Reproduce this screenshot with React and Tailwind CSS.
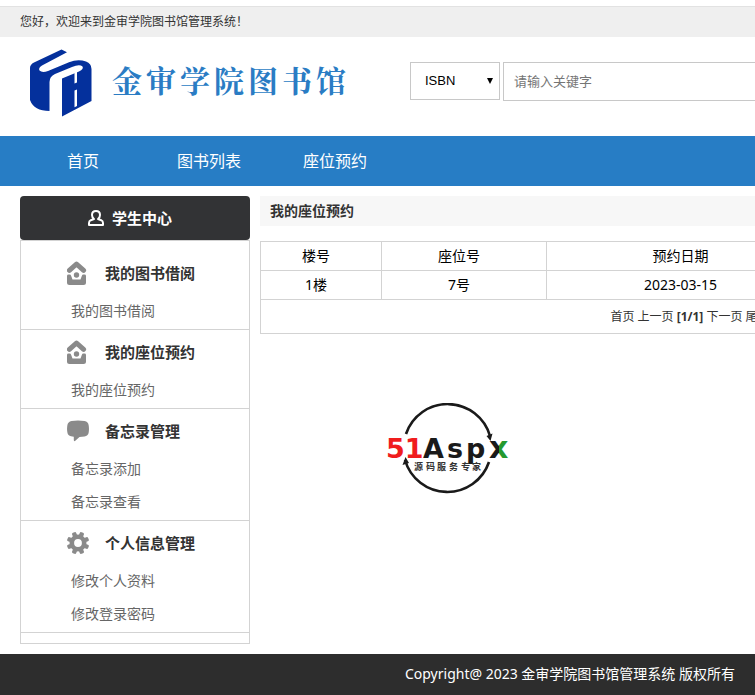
import React from 'react';

const navLinks = ['首页', '图书列表', '座位预约'];

const menuGroups = [
  { title: '我的图书借阅', icon: HomeIcon, items: ['我的图书借阅'] },
  { title: '我的座位预约', icon: HomeIcon, items: ['我的座位预约'] },
  { title: '备忘录管理', icon: ChatIcon, items: ['备忘录添加', '备忘录查看'] },
  { title: '个人信息管理', icon: GearIcon, items: ['修改个人资料', '修改登录密码'] },
];

const reservations = [{ floor: '1楼', seat: '7号', date: '2023-03-15' }];

function HomeIcon() {
  return (
    <svg width="22" height="24" viewBox="0 0 22 24" className="text-[#8a8a8a]" aria-hidden="true">
      <path d="M2.4 9.4 L9.5 3 L16.6 9.4" fill="none" stroke="currentColor" strokeWidth="5" strokeLinecap="round" strokeLinejoin="round" />
      <circle cx="9.5" cy="14" r="2.7" fill="currentColor" />
      <path d="M0 15 Q0 13.6 1.5 13.6 H2.6 Q3.8 13.6 4.2 15 L5.5 18.6 H13.5 L14.8 15 Q15.2 13.6 16.4 13.6 H17.5 Q19 13.6 19 15 V21.5 Q19 24 16.5 24 H2.5 Q0 24 0 21.5 Z" fill="currentColor" />
    </svg>
  );
}

function ChatIcon() {
  return (
    <svg width="22" height="24" viewBox="0 0 22 24" fill="#8a8a8a" aria-hidden="true">
      <path d="M4.5 2 Q11 0.8 17.5 2 Q21.3 2.8 21.7 6.5 Q22.3 10.5 21.6 14 Q21 17 17.5 17.4 L12.5 17.9 L8 22 Q6.8 22.5 6.8 21 V17.8 L4 17.3 Q0.9 16.6 0.4 13.5 Q-0.3 10 0.4 6 Q1 2.8 4.5 2 Z" />
    </svg>
  );
}

function GearIcon() {
  return (
    <svg width="22" height="22" viewBox="-11 -11 22 22" aria-hidden="true">
      <circle r="6.2" fill="none" stroke="#8a8a8a" strokeWidth="4.6" />
      {[22.5, 67.5, 112.5, 157.5, 202.5, 247.5, 292.5, 337.5].map((angle) => (
        <rect key={angle} x="-2.2" y="-11.3" width="4.4" height="5" rx="1.4" fill="#8a8a8a" transform={`rotate(${angle})`} />
      ))}
    </svg>
  );
}

function UserIcon() {
  return (
    <svg width="16" height="16" viewBox="0 0 16 16" fill="none" stroke="#fff" strokeWidth="2" strokeLinejoin="round" aria-hidden="true">
      <path d="M6 9 Q4 7.5 4 5 Q4 1 8 1 Q12 1 12 5 Q12 7.5 10 9 L13.2 10.2 Q15 11 15 13 V15 H1 V13 Q1 11 2.8 10.2 Z" />
    </svg>
  );
}

function SchoolLogo() {
  return (
    <svg width="64" height="68" viewBox="0 0 64 68" fill="#04309c" aria-hidden="true">
      <path d="M33.5 0.5 L39 3.2 L14 16.5 Q10 19 11.5 21.5 Q14 24 20 22 L41 13.2 Q50 9.5 58 12.5 Q63.5 14.5 63.5 20 V52 L34 67.5 V29.5 L51 22.5 Q56 20 54.5 17.5 Q51.5 15 44 18 L27 25 Q21.5 27.5 21.5 33 V62 Q6 62 2 51 V19 Q2 15.5 6 13.5 Z" />
      <path d="M46.5 23.5 L49 22.4 V33.5 L46.5 34.6 Z M46.5 41.5 L49 40.4 V57 L46.5 58.2 Z" fill="#fff" />
    </svg>
  );
}

function AspxLogo() {
  return (
    <svg width="126" height="92" viewBox="0 0 126 92" aria-label="51Aspx">
      <defs>
        <linearGradient id="xFill">
          <stop offset="0.5" stopColor="#1a1a1a" />
          <stop offset="0.5" stopColor="#25992f" />
        </linearGradient>
      </defs>
      <g fill="none" stroke="#1a1a1a" strokeWidth="2.6">
        <path d="M19 31 A44 44 0 0 1 103 33" />
        <path d="M102 59 A44 44 0 0 1 18 57" />
      </g>
      <path d="M99.5 33 L105.5 30.5 L103.5 38 Z M15.5 62 L18.5 54 L22 60 Z" fill="#1a1a1a" />
      <g fontFamily="'DejaVu Sans'" fontWeight="bold" fontSize="27">
        <text x="-1" y="55" fill="#f01d1d">51</text>
        <g fill="#1a1a1a">
          <text x="36" y="55">A</text>
          <text x="60" y="55">s</text>
          <text x="79" y="55">p</text>
          <text x="102" y="55" fontSize="30" fill="url(#xFill)">x</text>
        </g>
      </g>
      <text x="27 39 50 62 74 85" y="67" fontFamily="'Noto Sans CJK SC'" fontSize="9" fontWeight="bold" fill="#333">
        源码服务专家
      </text>
    </svg>
  );
}

function Header() {
  return (
    <header>
      <div className="mt-1.5 border-t border-[#e2e2e2] bg-[#efefef]">
        <p className="mx-auto w-[1100px] text-xs leading-[30px] text-[#333]">
          您好，欢迎来到金审学院图书馆管理系统！
        </p>
      </div>
      <div className="mx-auto flex h-[99px] w-[1100px] items-start">
        <a href="#" className="flex w-[390px] pt-3 pl-2">
          <SchoolLogo />
          <span className="ml-5 flex gap-1 pt-2 font-['Noto_Serif_CJK_SC','Noto_Sans_CJK_SC',serif] text-3xl leading-[44px] font-bold text-[#2a7cc4]">
            {'金审学院图书馆'.split('').map((char) => (
              <span key={char}>{char}</span>
            ))}
          </span>
        </a>
        <form className="flex items-start gap-[3px] pt-[25px]">
          <div className="relative">
            <select
              aria-label="检索字段"
              className="h-[38px] w-[90px] appearance-none border border-[#c8c8c8] bg-white pl-3.5 font-['Liberation_Sans',sans-serif] text-[13px] text-black"
            >
              <option>ISBN</option>
            </select>
            <svg width="6" height="6" viewBox="0 0 6 6" className="pointer-events-none absolute top-4 right-[7px]" aria-hidden="true">
              <path d="M0 0 H6 L3 6 Z" />
            </svg>
          </div>
          <input
            type="text"
            aria-label="关键字"
            placeholder="请输入关键字"
            className="h-[39px] w-[400px] border border-[#c8c8c8] px-2.5 pb-0.5 text-[13px] placeholder:text-[#757575]"
          />
        </form>
      </div>
      <nav className="bg-[#277dc5]">
        <ul className="mx-auto flex w-[1100px]">
          {navLinks.map((label) => (
            <li key={label} className="w-[126px] text-center">
              <a href="#" className="text-base leading-[50px] text-white">{label}</a>
            </li>
          ))}
        </ul>
      </nav>
    </header>
  );
}

function Sidebar() {
  return (
    <aside className="w-[230px] shrink-0">
      <h2 className="flex h-11 items-center justify-center gap-2 rounded bg-[#323335] pr-2.5 text-[15px] font-bold text-white">
        <UserIcon />
        学生中心
      </h2>
      <div className="border border-[#d3d3d3] py-2.5">
        {menuGroups.map(({ title, icon: Icon, items }) => (
          <section key={title} className="border-b border-[#d3d3d3] pb-px">
            <h3 className="flex h-11 items-center gap-4 pl-[46px] text-[15px] font-bold text-[#333]">
              <Icon />
              {title}
            </h3>
            <ul className="pl-[50px]">
              {items.map((item) => (
                <li key={item} className="h-[33px] text-sm leading-[31px]">
                  <a href="#" className="text-[#666]">{item}</a>
                </li>
              ))}
            </ul>
          </section>
        ))}
      </div>
    </aside>
  );
}

function Reservations() {
  const cell = 'h-[29px] border border-[#d3d3d3] p-0 font-normal';
  const paddedCell = 'h-[29px] border border-[#d3d3d3] p-0 pr-2.5 font-normal';

  return (
    <main className="min-w-0 flex-1">
      <h2 className="bg-[#f7f7f7] pl-2.5 text-sm leading-[30px] font-bold text-[#333]">我的座位预约</h2>
      <table className="mt-[15px] w-full table-fixed border-collapse text-center text-sm text-black">
        <colgroup>
          <col className="w-[121px]" />
          <col className="w-[165px]" />
          <col className="w-[268px]" />
          <col />
        </colgroup>
        <thead>
          <tr>
            <th className={paddedCell}>楼号</th>
            <th className={paddedCell}>座位号</th>
            <th className={cell}>预约日期</th>
            <td className={cell}></td>
          </tr>
        </thead>
        <tbody>
          {reservations.map((row) => (
            <tr key={row.date}>
              <td className={paddedCell}>{row.floor}</td>
              <td className={paddedCell}>{row.seat}</td>
              <td className={cell}>{row.date}</td>
              <td className={cell}></td>
            </tr>
          ))}
          <tr>
            <td colSpan={4} className="h-[34px] border border-[#d3d3d3] p-0 text-xs text-[#333]">
              <a href="#">首页</a> <a href="#">上一页</a> <b>[1/1]</b> <a href="#">下一页</a> <a href="#">尾页</a>
            </td>
          </tr>
        </tbody>
      </table>
      <div className="mt-[69px] ml-[127px]">
        <AspxLogo />
      </div>
    </main>
  );
}

function App() {
  return (
    <div className="flow-root overflow-x-hidden bg-white font-['Noto_Sans','Noto_Sans_CJK_SC',sans-serif]">
      <div className="min-w-[1140px]">
        <Header />
        <div className="mx-auto flex w-[1100px] gap-2.5 py-2.5">
          <Sidebar />
          <Reservations />
        </div>
        <footer className="bg-[#2d2d2d] pb-0.5 text-center text-sm leading-[39px] text-white">
          Copyright@ 2023 金审学院图书馆管理系统 版权所有
        </footer>
      </div>
    </div>
  );
}

export default App;
